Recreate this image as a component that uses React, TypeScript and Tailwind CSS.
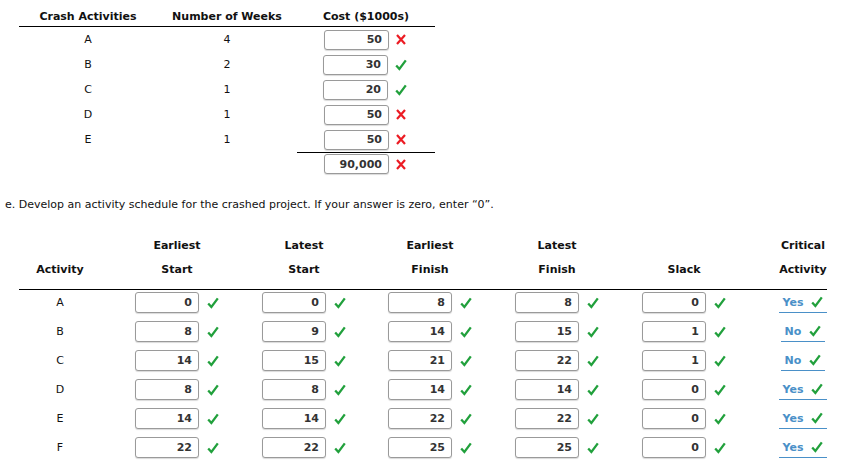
import React from "react";

// Crashed-project worksheet: crash cost table on top, activity schedule below.

type Mark = "ok" | "bad";

const crashRows: { activity: string; weeks: string; cost: string; mark: Mark }[] = [
  { activity: "A", weeks: "4", cost: "50", mark: "bad" },
  { activity: "B", weeks: "2", cost: "30", mark: "ok" },
  { activity: "C", weeks: "1", cost: "20", mark: "ok" },
  { activity: "D", weeks: "1", cost: "50", mark: "bad" },
  { activity: "E", weeks: "1", cost: "50", mark: "bad" },
];

const schedule: { activity: string; values: string[]; critical: string }[] = [
  { activity: "A", values: ["0", "0", "8", "8", "0"], critical: "Yes" },
  { activity: "B", values: ["8", "9", "14", "15", "1"], critical: "No" },
  { activity: "C", values: ["14", "15", "21", "22", "1"], critical: "No" },
  { activity: "D", values: ["8", "8", "14", "14", "0"], critical: "Yes" },
  { activity: "E", values: ["14", "14", "22", "22", "0"], critical: "Yes" },
  { activity: "F", values: ["22", "22", "25", "25", "0"], critical: "Yes" },
];

function Check() {
  return (
    <svg width="12" height="12" viewBox="0 0 12 12" className="shrink-0">
      <path
        d="M1.2 6.4 L4.4 10 L10.8 1.4"
        fill="none"
        stroke="#21a03c"
        strokeWidth="2.3"
        strokeLinecap="butt"
        strokeLinejoin="miter"
      />
    </svg>
  );
}

function Cross() {
  return (
    <svg width="10" height="11" viewBox="0 0 10 11" className="shrink-0">
      <path d="M1 1 L9 10 M9 1 L1 10" fill="none" stroke="#ec1c24" strokeWidth="2.2" />
    </svg>
  );
}

function Box({ value }: { value: string }) {
  return (
    <div className="h-[20px] w-[65px] rounded-[3px] border border-[#9a9a9a] bg-white shadow-[0_1px_1px_rgba(0,0,0,0.15)] flex items-center justify-end pr-[6px] font-bold text-[#333]">
      {value}
    </div>
  );
}

function Answer({ value, mark }: { value: string; mark: Mark }) {
  return (
    <div className="flex items-center gap-[7px]">
      <Box value={value} />
      {mark === "ok" ? <Check /> : <Cross />}
    </div>
  );
}

const cols = "grid grid-cols-[82px_152px_102px_150px_104px_150px_88px]";

export default function App() {
  return (
    <div className="w-[845px] h-[473px] bg-white text-[11px] leading-[13px] text-[#111] font-['DejaVu_Sans',Verdana,sans-serif] overflow-hidden">
      {/* crash cost table */}
      <div className="ml-[19px] w-[416px]">
        <div className="grid grid-cols-[138px_140px_138px] pt-[10px] pb-[3px] border-b border-black font-bold text-center">
          <div>Crash Activities</div>
          <div>Number of Weeks</div>
          <div>Cost ($1000s)</div>
        </div>
        {crashRows.map((r) => (
          <div key={r.activity} className="grid grid-cols-[138px_140px_138px] h-[25px] items-center text-center">
            <div>{r.activity}</div>
            <div>{r.weeks}</div>
            <div className="flex justify-center pr-[2px]">
              <Answer value={r.cost} mark={r.mark} />
            </div>
          </div>
        ))}
        <div className="grid grid-cols-[138px_140px_138px]">
          <div />
          <div />
          <div className="border-t border-black h-[23px] flex items-center justify-center pr-[2px]">
            <Answer value="90,000" mark="bad" />
          </div>
        </div>
      </div>

      <p className="mt-[23px] pl-[5px]">
        e. Develop an activity schedule for the crashed project. If your answer is zero, enter “0”.
      </p>

      {/* activity schedule */}
      <div className="mt-[22px] ml-[19px] w-[808px]">
        <div className="border-b border-black pb-[8px] font-bold text-center">
          <div className={`${cols} h-[24px] items-center`}>
            <div />
            <div>Earliest</div>
            <div>Latest</div>
            <div>Earliest</div>
            <div>Latest</div>
            <div />
            <div>Critical</div>
          </div>
          <div className={`${cols} h-[24px] items-center`}>
            <div>Activity</div>
            <div>Start</div>
            <div>Start</div>
            <div>Finish</div>
            <div>Finish</div>
            <div>Slack</div>
            <div>Activity</div>
          </div>
        </div>
        {schedule.map((r) => (
          <div key={r.activity} className={`${cols} h-[29px] pt-[2px] items-start text-center`}>
            <div className="h-[21px] flex items-center justify-center">{r.activity}</div>
            {r.values.map((v, i) => (
              <div key={i} className="flex justify-center">
                <div className="flex items-center gap-[8px]">
                  <div className="h-[21px] w-[64px] rounded-[3px] border border-[#9a9a9a] bg-white shadow-[0_1px_1px_rgba(0,0,0,0.15)] flex items-center justify-end pr-[6px] font-bold text-[#333]">
                    {v}
                  </div>
                  <Check />
                </div>
              </div>
            ))}
            <div className="flex justify-center">
              <div className="h-[21px] flex items-center gap-[8px] px-[4px] border-b border-[#4a90c8] text-[#4a90c8] font-bold">
                <span>{r.critical}</span>
                <Check />
              </div>
            </div>
          </div>
        ))}
      </div>
    </div>
  );
}
